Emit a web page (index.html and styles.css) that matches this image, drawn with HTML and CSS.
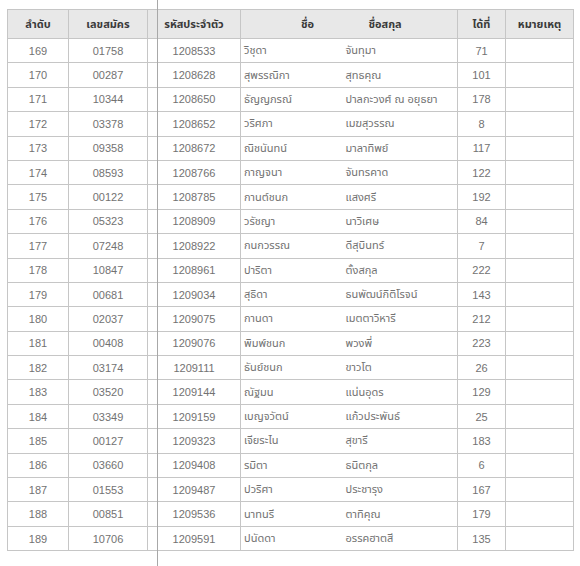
FILE: index.html
```html
<!DOCTYPE html>
<html lang="th">
<head>
<meta charset="utf-8">
<link rel="stylesheet" href="styles.css">
</head>
<body>
<div class="sheet">
<table class="list">
<colgroup>
<col class="c1"><col class="c2"><col class="c3"><col class="c4"><col class="c5"><col class="c6"><col class="c7">
</colgroup>
<thead>
<tr><th>ลำดับ</th><th>เลขสมัคร</th><th>รหัสประจำตัว</th><th class="fn">ชื่อ</th><th class="ln">ชื่อสกุล</th><th>ได้ที่</th><th>หมายเหตุ</th></tr>
</thead>
<tbody>
<tr><td>169</td><td>01758</td><td>1208533</td><td class="fn">วิชุดา</td><td class="ln">จันทุมา</td><td>71</td><td></td></tr>
<tr><td>170</td><td>00287</td><td>1208628</td><td class="fn">สุพรรณิกา</td><td class="ln">สุทธคุณ</td><td>101</td><td></td></tr>
<tr><td>171</td><td>10344</td><td>1208650</td><td class="fn">ธัญญภรณ์</td><td class="ln">ปาลกะวงศ์ ณ อยุธยา</td><td>178</td><td></td></tr>
<tr><td>172</td><td>03378</td><td>1208652</td><td class="fn">วริศภา</td><td class="ln">เมฆสุวรรณ</td><td>8</td><td></td></tr>
<tr><td>173</td><td>09358</td><td>1208672</td><td class="fn">ณิชนันทน์</td><td class="ln">มาลาทิพย์</td><td>117</td><td></td></tr>
<tr><td>174</td><td>08593</td><td>1208766</td><td class="fn">กาญจนา</td><td class="ln">จันทรคาด</td><td>122</td><td></td></tr>
<tr><td>175</td><td>00122</td><td>1208785</td><td class="fn">กานต์ชนก</td><td class="ln">แสงศรี</td><td>192</td><td></td></tr>
<tr><td>176</td><td>05323</td><td>1208909</td><td class="fn">วรัชญา</td><td class="ln">นาวิเศษ</td><td>84</td><td></td></tr>
<tr><td>177</td><td>07248</td><td>1208922</td><td class="fn">กนกวรรณ</td><td class="ln">ดีสุบินทร์</td><td>7</td><td></td></tr>
<tr><td>178</td><td>10847</td><td>1208961</td><td class="fn">ปาริตา</td><td class="ln">ตั้งสกุล</td><td>222</td><td></td></tr>
<tr><td>179</td><td>00681</td><td>1209034</td><td class="fn">สุธิดา</td><td class="ln">ธนพัฒน์กิติโรจน์</td><td>143</td><td></td></tr>
<tr><td>180</td><td>02037</td><td>1209075</td><td class="fn">กานดา</td><td class="ln">เมตตาวิหารี</td><td>212</td><td></td></tr>
<tr><td>181</td><td>00408</td><td>1209076</td><td class="fn">พิมพ์ชนก</td><td class="ln">พวงพี่</td><td>223</td><td></td></tr>
<tr><td>182</td><td>03174</td><td>1209111</td><td class="fn">ธันย์ชนก</td><td class="ln">ขาวโต</td><td>26</td><td></td></tr>
<tr><td>183</td><td>03520</td><td>1209144</td><td class="fn">ณัฐมน</td><td class="ln">แน่นอุดร</td><td>129</td><td></td></tr>
<tr><td>184</td><td>03349</td><td>1209159</td><td class="fn">เบญจวัตน์</td><td class="ln">แก้วประพันธ์</td><td>25</td><td></td></tr>
<tr><td>185</td><td>00127</td><td>1209323</td><td class="fn">เจียระไน</td><td class="ln">สุขารี</td><td>183</td><td></td></tr>
<tr><td>186</td><td>03660</td><td>1209408</td><td class="fn">รมิตา</td><td class="ln">ธนิตกุล</td><td>6</td><td></td></tr>
<tr><td>187</td><td>01553</td><td>1209487</td><td class="fn">ปวริศา</td><td class="ln">ประชารุง</td><td>167</td><td></td></tr>
<tr><td>188</td><td>00851</td><td>1209536</td><td class="fn">นาทนรี</td><td class="ln">ตาทิคุณ</td><td>179</td><td></td></tr>
<tr><td>189</td><td>10706</td><td>1209591</td><td class="fn">ปนัดดา</td><td class="ln">อรรคฮาตสี</td><td>135</td><td></td></tr>
</tbody>
</table>
<div class="fold"></div>
</div>
</body>
</html>
```

FILE: styles.css
```css
html, body {
  margin: 0;
  padding: 0;
  background: #ffffff;
}
body {
  width: 580px;
  height: 566px;
  overflow: hidden;
  font-family: "Liberation Sans", "Noto Sans Thai", "Noto Sans", sans-serif;
  color: #727272;
}
.sheet {
  position: relative;
  padding: 9px 0 0 7px;
  height: 557px;
}
.list {
  border-collapse: collapse;
  table-layout: fixed;
  width: 566px;
  font-size: 11px;
}
.c1 { width: 61px; }
.c2 { width: 79px; }
.c3 { width: 93px; }
.c4 { width: 102px; }
.c5 { width: 115px; }
.c6 { width: 48px; }
.c7 { width: 68px; }
.list th, .list td {
  border: 1px solid #c6c6c6;
  text-align: center;
  padding: 0;
  white-space: nowrap;
  overflow: hidden;
}
.list th {
  height: 28px;
  background: #e8e8e8;
  color: #3a3a3a;
  font-weight: bold;
  font-size: 11px;
}
.list td {
  height: 23.4px;
}
.list .fn {
  text-align: left;
  padding-left: 3px;
  border-right: none;
}
.list .ln {
  text-align: left;
  padding-left: 3px;
  border-left: none;
}
.list th.fn {
  text-align: left;
  padding-left: 60px;
}
.list th.ln {
  padding-left: 26px;
}
.fold {
  position: absolute;
  left: 157px;
  top: 0;
  width: 1px;
  height: 566px;
  background: #a8a8a8;
}
```
